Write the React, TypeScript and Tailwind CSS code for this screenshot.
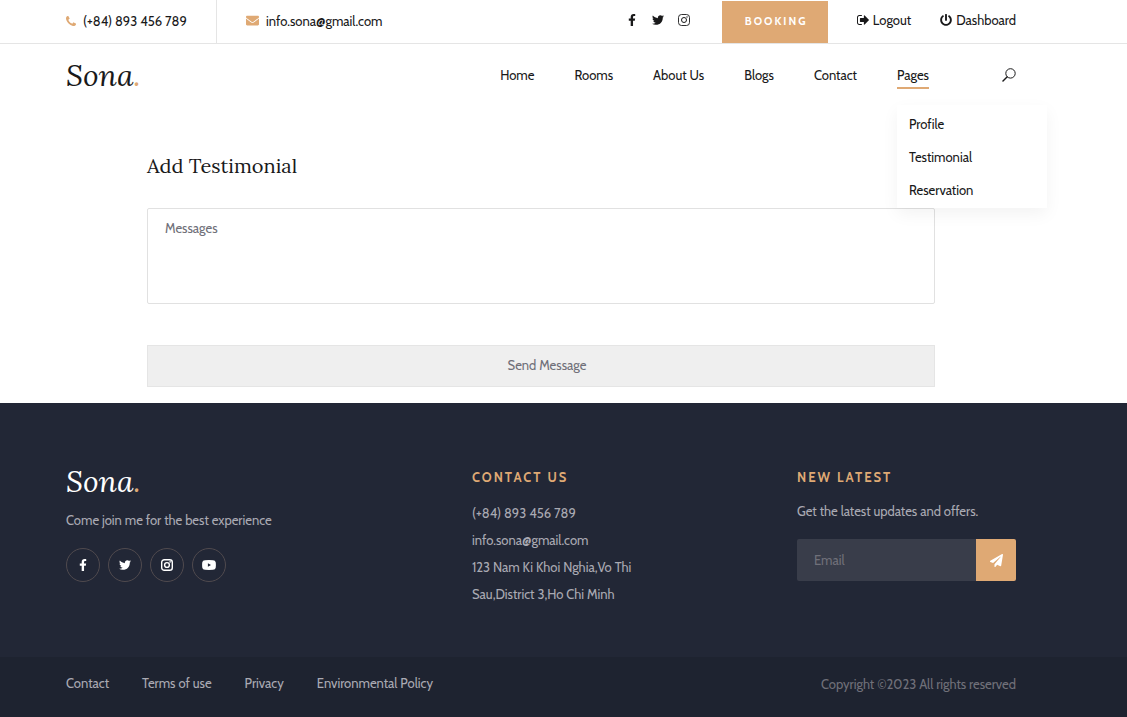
import React from "react";
import { FaEnvelope, FaFacebookF, FaPaperPlane, FaPowerOff, FaTwitter } from "react-icons/fa";

const PhoneIcon = () => (
  <svg viewBox="0 0 1408 1408" fill="currentColor" className="size-[10px]" aria-hidden="true">
    <path d="M1408 1112q0 27-10 70.5t-21 68.5q-21 50-122 106-94 51-186 51-27 0-52.5-3.5t-57.5-12.5-47.5-14.5-55.5-20.5-49-18q-98-35-175-83-128-79-264.5-215.5t-215.5-264.5q-48-77-83-175-3-9-18-49t-20.5-55.5-14.5-47.5-12.5-57.5-3.5-52.5q0-92 51-186 56-101 106-122 25-11 68.5-21t70.5-10q14 0 21 3 18 6 53 76 11 19 30 54t35 63.5 31 53.5q3 4 17.5 25t21.5 35.5 7 28.5q0 20-28.5 50t-62 55-62 53-28.5 46q0 9 5 22.5t8.5 20.5 14 24 11.5 19q76 137 174 235t235 174q2 1 19 11.5t24 14 20.5 8.5 22.5 5q18 0 46-28.5t53-62 55-62 50-28.5q14 0 28.5 7t35.5 21.5 25 17.5q25 15 53.5 31t63.5 35 54 30q70 35 76 53 3 7 3 21z" />
  </svg>
);

const SignOutIcon = () => (
  <svg viewBox="0 256 1568 1280" fill="currentColor" className="h-[10px] w-3" aria-hidden="true">
    <path d="M640 1440q0 4 1 20t.5 26.5-3 23.5-10 19.5-20.5 6.5h-320q-119 0-203.5-84.5t-84.5-203.5v-704q0-119 84.5-203.5t203.5-84.5h320q13 0 22.5 9.5t9.5 22.5q0 4 1 20t.5 26.5-3 23.5-10 19.5-20.5 6.5h-320q-66 0-113 47t-47 113v704q0 66 47 113t113 47h312l11.5 1 11.5 3 8 5.5 7 9 2 13.5zm928-544q0 26-19 45l-544 544q-19 19-45 19t-45-19-19-45v-288h-448q-26 0-45-19t-19-45v-384q0-26 19-45t45-19h448v-288q0-26 19-45t45-19 45 19l544 544q19 19 19 45z" />
  </svg>
);

const SearchIcon = () => (
  <svg viewBox="0 0 14 14" fill="none" stroke="currentColor" className="size-[14px]" aria-hidden="true">
    <circle cx="8.5" cy="5.4" r="4.7" strokeWidth="1" />
    <path d="M5 9 1 13" strokeWidth="1.5" strokeLinecap="round" />
  </svg>
);

const ThinInstagramIcon = ({ className }: { className: string }) => (
  <svg viewBox="0 0 12 12" fill="none" stroke="currentColor" className={className} aria-hidden="true">
    <rect x="0.5" y="0.5" width="11" height="11" rx="3" strokeWidth="0.9" />
    <circle cx="6" cy="6" r="2.5" strokeWidth="1" />
    <circle cx="9" cy="3" r="0.7" fill="currentColor" stroke="none" />
  </svg>
);

const InstagramIcon = ({ className }: { className: string }) => (
  <svg viewBox="0 0 12 12" fill="none" stroke="currentColor" className={className} aria-hidden="true">
    <rect x="0.7" y="0.7" width="10.6" height="10.6" rx="2.6" strokeWidth="1.4" />
    <circle cx="6" cy="6" r="2.4" strokeWidth="1.4" />
    <circle cx="9.1" cy="2.9" r="0.8" fill="currentColor" stroke="none" />
  </svg>
);

const YoutubeIcon = ({ className }: { className: string }) => (
  <svg viewBox="0 0 14 14" fill="currentColor" className={className} aria-hidden="true">
    <path
      fillRule="evenodd"
      d="M3 2.2Q7 1.9 11 2.2 13.4 2.3 13.7 4.3 14.1 7 13.7 9.7 13.4 11.7 11 11.8 7 12.1 3 11.8.6 11.7.3 9.7-.1 7 .3 4.3.6 2.3 3 2.2ZM5.9 5.3v3.4L9 7Z"
    />
  </svg>
);

const Logo = ({ className }: { className: string }) => (
  <a href="#" className={`font-['Lora','Liberation_Serif',serif] text-[30px] leading-[38px] italic ${className}`}>
    Sona<span className="text-[#dfa974]">.</span>
  </a>
);

const navItems = ["Home", "Rooms", "About Us", "Blogs", "Contact"];
const pageItems = ["Profile", "Testimonial", "Reservation"];
const legalLinks = ["Contact", "Terms of use", "Privacy", "Environmental Policy"];

const socials = [
  { name: "Facebook", Icon: FaFacebookF, size: "size-3" },
  { name: "Twitter", Icon: FaTwitter, size: "size-3" },
  { name: "Instagram", Icon: InstagramIcon, size: "size-3" },
  { name: "YouTube", Icon: YoutubeIcon, size: "size-[14px]" },
];

const page = "pl-[66px] pr-[111px]";

function TopBar() {
  return (
    <div className={`flex h-11 items-stretch justify-between border-b border-[#e5e5e5] ${page}`}>
      <div className="flex">
        <div className="flex w-[151px] items-center gap-[7px] border-r border-[#e5e5e5] pb-[2px] whitespace-nowrap">
          <span className="text-[#dfa974]"><PhoneIcon /></span>
          (+84) 893 456 789
        </div>
        <div className="flex items-center gap-[7px] pb-[2px] pl-[29px]">
          <FaEnvelope className="size-[13px] text-[#dfa974]" />
          info.sona@gmail.com
        </div>
      </div>
      <div className="flex">
        <div className="flex items-center gap-[14px] pr-8 pb-[3px]">
          <a href="#" aria-label="Facebook"><FaFacebookF className="size-3" /></a>
          <a href="#" aria-label="Twitter"><FaTwitter className="size-3" /></a>
          <a href="#" aria-label="Instagram"><ThinInstagramIcon className="size-3" /></a>
        </div>
        <a href="#" className="mt-px flex w-[106px] items-center bg-[#dfa974] pb-[2px] pl-[23px] text-[11px] font-bold tracking-[2px] text-white">
          BOOKING
        </a>
        <div className="flex items-center gap-[29px] pb-1 pl-[29px]">
          <a href="#" className="flex items-center gap-1"><SignOutIcon />Logout</a>
          <a href="#" className="flex items-center gap-1"><FaPowerOff className="size-3" />Dashboard</a>
        </div>
      </div>
    </div>
  );
}

function MainNav() {
  return (
    <header className={`flex h-[65px] items-center justify-between pb-1 ${page}`}>
      <Logo className="text-[#19191a]" />
      <div className="flex items-center">
        <nav className="flex items-center gap-10">
          {navItems.map((item) => (
            <a key={item} href="#">{item}</a>
          ))}
          <div className="relative">
            <a href="#" className="block">Pages</a>
            <span className="absolute inset-x-0 top-[22px] h-[2px] bg-[#dfa974]" />
            <ul className="absolute top-10 left-0 z-10 w-[150px] bg-white pt-[3px] pb-px pl-3 shadow-[0_6px_16px_rgba(0,0,0,0.05)]">
              {pageItems.map((item) => (
                <li key={item} className="flex h-[33px] items-center"><a href="#">{item}</a></li>
              ))}
            </ul>
          </div>
        </nav>
        <button type="button" aria-label="Search" className="ml-[73px]"><SearchIcon /></button>
      </div>
    </header>
  );
}

function TestimonialForm() {
  return (
    <main className="pt-[41px] pr-48 pb-4 pl-[147px]">
      <h1 className="font-['Lora','Liberation_Serif',serif] text-[20px] leading-8">Add Testimonial</h1>
      <form className="mt-[26px]">
        <textarea
          aria-label="Messages"
          placeholder="Messages"
          className="block h-24 w-full resize-none rounded-[2px] border border-[#e1e1e1] px-[17px] pt-[9px] outline-none placeholder:text-[#707079]"
        />
        <button type="button" className="mt-[41px] block h-[42px] w-full border border-[#e5e5e5] bg-[#efefef] pb-[2px] pl-3 text-[#707079]">
          Send Message
        </button>
      </form>
    </main>
  );
}

function Footer() {
  const heading = "text-[13px] leading-5 font-bold tracking-[2px] text-[#dfa974]";
  return (
    <footer className="bg-[#222736] text-[#aaaab3]">
      <div className={`flex h-[254px] pt-[59px] ${page}`}>
        <div className="flex-1">
          <Logo className="block text-white" />
          <p className="mt-[10px]">Come join me for the best experience</p>
          <div className="mt-[18px] flex gap-2">
            {socials.map(({ name, Icon, size }) => (
              <a key={name} href="#" aria-label={name} className="flex size-[34px] items-center justify-center rounded-full border border-[#504a4e] text-white">
                <Icon className={size} />
              </a>
            ))}
          </div>
        </div>
        <div className="w-[325px] pt-[5px]">
          <h2 className={heading}>CONTACT US</h2>
          <ul className="mt-[13px] leading-[27px]">
            <li>(+84) 893 456 789</li>
            <li>info.sona@gmail.com</li>
            <li>123 Nam Ki Khoi Nghia,Vo Thi</li>
            <li>Sau,District 3,Ho Chi Minh</li>
          </ul>
        </div>
        <div className="w-[219px] pt-[5px]">
          <h2 className={heading}>NEW LATEST</h2>
          <p className="mt-[14px]">Get the latest updates and offers.</p>
          <form className="mt-[18px] flex h-[42px] overflow-hidden rounded-[2px]">
            <input
              type="email"
              aria-label="Email"
              placeholder="Email"
              className="min-w-0 flex-1 bg-[#393d4a] px-[17px] text-white outline-none placeholder:text-[#707079]"
            />
            <button type="button" aria-label="Subscribe" className="flex w-10 items-center justify-center bg-[#dfa974] text-white">
              <FaPaperPlane className="size-[13px]" />
            </button>
          </form>
        </div>
      </div>
      <div className={`flex h-[60px] items-center justify-between bg-[#1e2330] pb-[6px] ${page}`}>
        <nav className="flex gap-[33px] pb-[2px]">
          {legalLinks.map((item) => (
            <a key={item} href="#">{item}</a>
          ))}
        </nav>
        <p className="text-[#707079]">Copyright ©2023 All rights reserved</p>
      </div>
    </footer>
  );
}

export default function App() {
  return (
    <div className="bg-white font-['Cabin','Lato',sans-serif] text-[13px] leading-5 text-[#19191a]">
      <TopBar />
      <MainNav />
      <TestimonialForm />
      <Footer />
    </div>
  );
}
